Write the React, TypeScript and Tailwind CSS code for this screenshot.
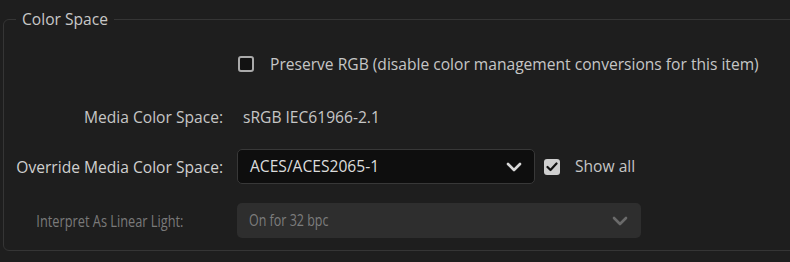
import React from "react";

function Chevron({ color }: { color: string }) {
  return (
    <svg width="16" height="10" viewBox="0 0 16 10" fill="none">
      <path d="M2 2 L8 8 L14 2" stroke={color} strokeWidth="2.6" strokeLinecap="round" strokeLinejoin="round" />
    </svg>
  );
}

export default function App() {
  return (
    <div
      className="w-[790px] h-[262px] overflow-hidden bg-[#1e1e1e] text-[15.6px] text-[#c6c6c6]"
      style={{ fontFamily: '"Open Sans", "Noto Sans", sans-serif' }}
    >
      <fieldset className="ml-[3px] mt-[9px] w-[830px] h-[242px] border border-[#353535] rounded-[6px] pl-0">
        <legend className="ml-[12px] px-[6px] leading-[20px] text-[#c8c8c8]">Color Space</legend>
        <div className="grid grid-cols-[219px_1fr] gap-x-[14px] items-center">
          <div className="h-[16px] mt-[27px]" />
          <div className="flex items-center gap-[16px] mt-[27px] h-[16px] pl-[1px]">
            <span className="w-[16px] h-[16px] rounded-[3px] border-[2px] border-[#aaaaaa] bg-[#121212]" />
            <span className="leading-[20px]">Preserve RGB (disable color management conversions for this item)</span>
          </div>

          <div className="text-right mt-[35px] leading-[20px]">Media Color Space:</div>
          <div className="mt-[35px] leading-[20px] pl-[6px]">sRGB IEC61966-2.1</div>

          <div className="text-right mt-[22px] leading-[20px] text-[#d0d0d0]">Override Media Color Space:</div>
          <div className="flex items-center mt-[22px]">
            <div className="w-[298px] h-[35px] rounded-[5px] border border-[#383838] bg-[#0e0e0e] flex items-center justify-between pl-[12px] pr-[12px] text-[#dcdcdc]">
              <span>ACES/ACES2065-1</span>
              <Chevron color="#d8d8d8" />
            </div>
            <span className="ml-[9px] w-[16px] h-[16px] rounded-[3px] bg-[#cfcfcf] flex items-center justify-center">
              <svg width="12" height="10" viewBox="0 0 12 10" fill="none">
                <path d="M1.5 5 L4.5 8 L10.5 1.5" stroke="#111" strokeWidth="2.2" strokeLinecap="round" strokeLinejoin="round" />
              </svg>
            </span>
            <span className="ml-[15px]">Show all</span>
          </div>

          <div className="text-right mt-[19px] leading-[20px] text-[#7a7a7a] pr-[46px]">
            <span className="inline-block whitespace-nowrap scale-x-[0.82] origin-right">Interpret As Linear Light:</span>
          </div>
          <div className="mt-[19px]">
            <div className="w-[404px] h-[35px] rounded-[5px] bg-[#2e2e2e] flex items-center justify-between pl-[12px] pr-[13px] text-[#7d7d7d]">
              <span className="inline-block whitespace-nowrap scale-x-[0.8] origin-left">On for 32 bpc</span>
              <Chevron color="#6a6a6a" />
            </div>
          </div>
        </div>
      </fieldset>
    </div>
  );
}
